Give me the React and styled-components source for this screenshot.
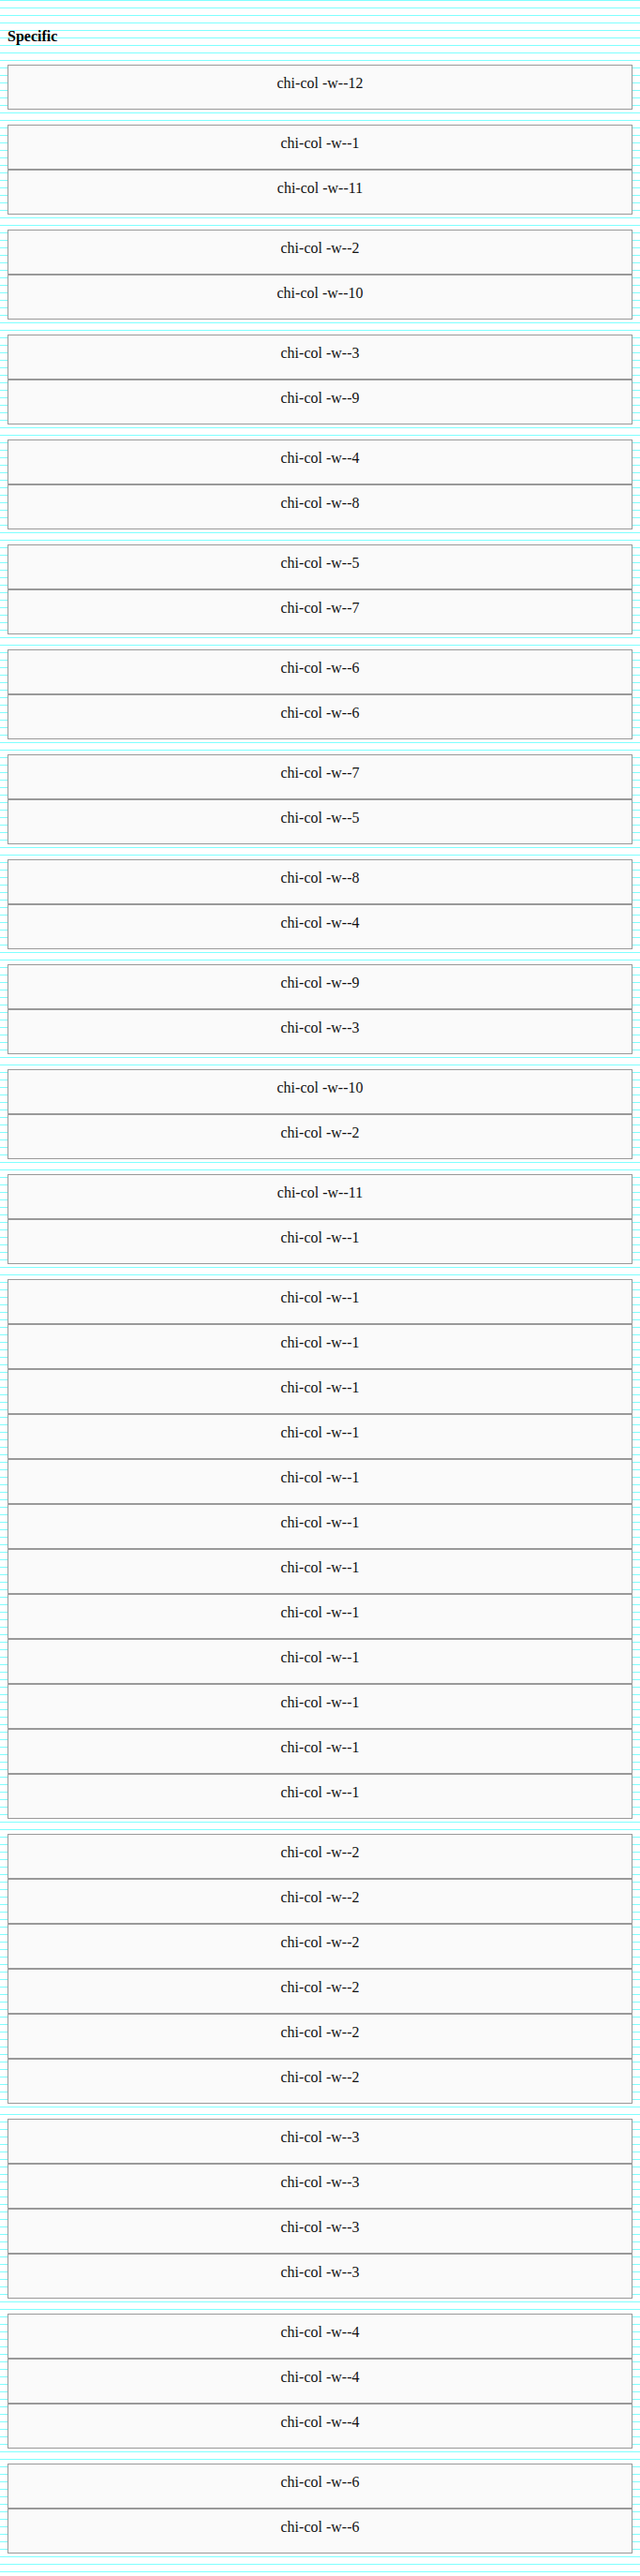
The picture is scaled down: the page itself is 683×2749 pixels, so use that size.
import styled, { createGlobalStyle } from "styled-components";

const rows = [
  [12],
  [1, 11],
  [2, 10],
  [3, 9],
  [4, 8],
  [5, 7],
  [6, 6],
  [7, 5],
  [8, 4],
  [9, 3],
  [10, 2],
  [11, 1],
  Array(12).fill(1),
  Array(6).fill(2),
  Array(4).fill(3),
  Array(3).fill(4),
  Array(2).fill(6),
];

const App = () => {
  return (
    <>
      <GlobalStyle />
      <Page>
        <Heading>Specific</Heading>
        <Rows>
          {rows.map((cols, i) => (
            <Grid key={i}>
              {cols.map((w, j) => (
                <Col key={j}>chi-col -w--{w}</Col>
              ))}
            </Grid>
          ))}
        </Rows>
      </Page>
    </>
  );
};

// Styled Components
const GlobalStyle = createGlobalStyle`
  html {
    background-color: #fff;
    background-image: linear-gradient(rgba(0, 255, 255, 0.5) 1px, transparent 1px);
    background-size: 100% 8px;
  }

  body {
    margin: 0;
    font-family: "Liberation Serif", "Times New Roman", serif;
    color: #111;
  }
`;

const Page = styled.div`
  padding: 0 8px 24px;
`;

const Heading = styled.h4`
  margin: 0;
  padding-top: 27px;
  font-size: 16px;
  line-height: 24px;
  font-weight: 700;
  color: #000;
`;

const Rows = styled.div`
  display: flex;
  flex-direction: column;
  gap: 16px;
  margin-top: 18px;
`;

const Grid = styled.div`
  display: flex;
  flex-direction: column;
`;

const Col = styled.div`
  box-sizing: border-box;
  height: 48px;
  padding-top: 7px;
  border: 1px solid #999;
  background: #fafafa;
  font-size: 16px;
  line-height: 24px;
  text-align: center;
`;

export default App;
